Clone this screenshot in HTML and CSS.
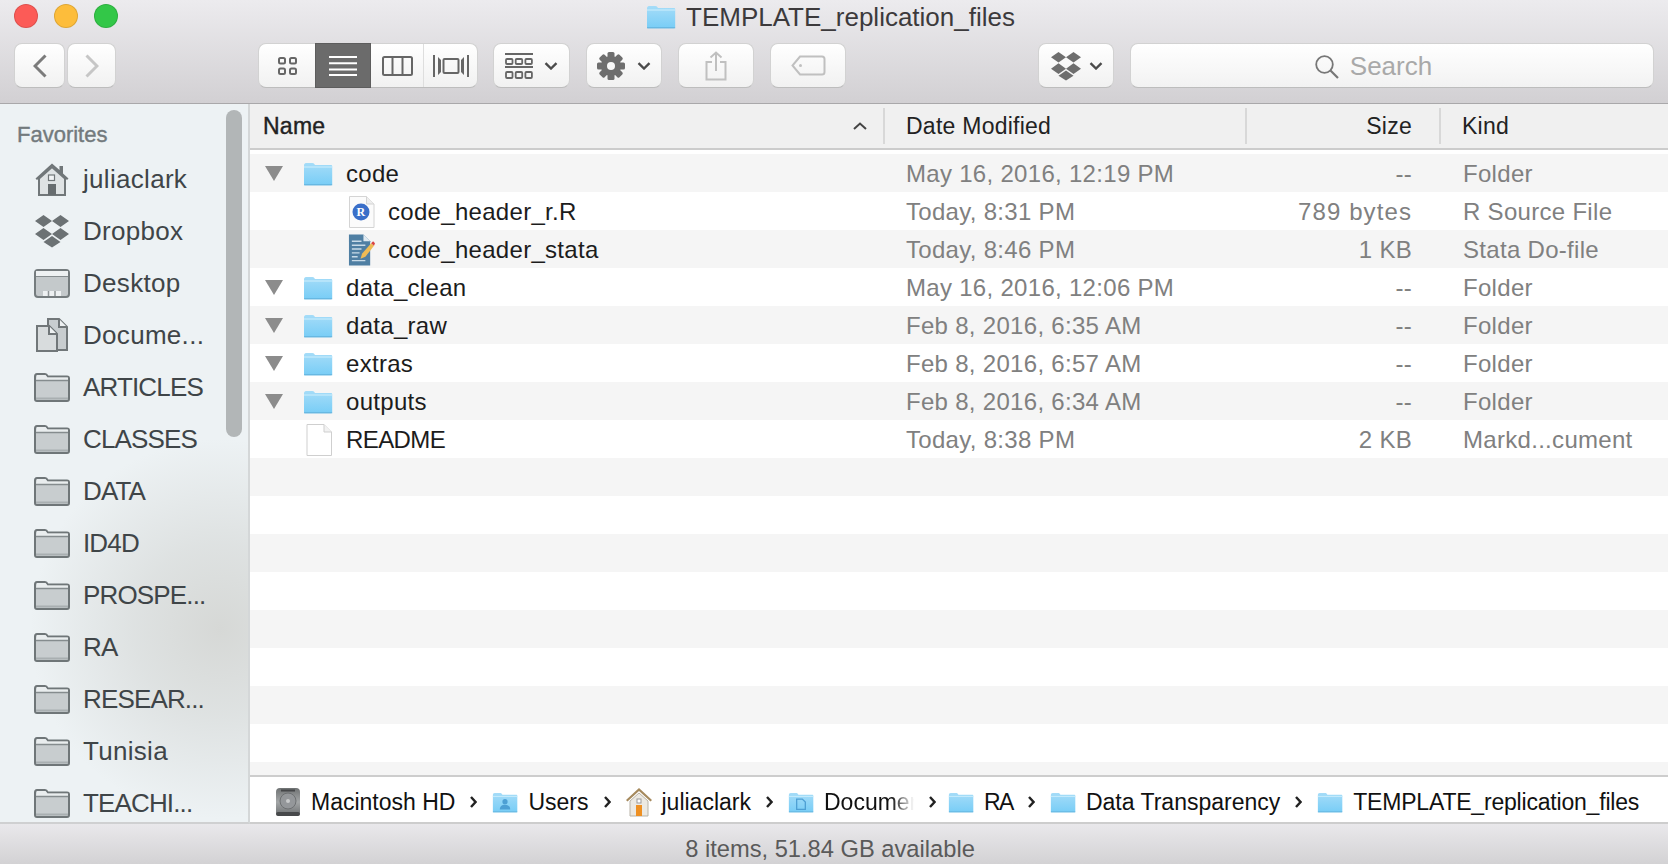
FILE: index.html
```html
<!DOCTYPE html>
<html lang="en">
<head>
<meta charset="utf-8">
<title>TEMPLATE_replication_files</title>
<link rel="stylesheet" href="styles.css">
</head>
<body>
<svg class="defs" width="0" height="0" aria-hidden="true">
  <defs>
    <linearGradient id="blue" x1="0" y1="0" x2="0" y2="1"><stop offset="0" stop-color="#a5dcf8"/><stop offset="1" stop-color="#78cdf6"/></linearGradient>
    <linearGradient id="disk" x1="0" y1="0" x2="0" y2="1"><stop offset="0" stop-color="#6f7273"/><stop offset=".5" stop-color="#a3a6a7"/><stop offset="1" stop-color="#6b6e70"/></linearGradient>
    <symbol id="folder" viewBox="0 0 30 24">
      <path d="M1 3.500C1 2 1.800 1 3 1h6.500c1.200 0 1.800.8 2.500 2H28c.7 0 1.200.5 1.200 1.200V22c0 .7-.5 1.200-1.200 1.200H2c-.7 0-1-.5-1-1.200z" fill="url(#blue)"/>
      <path d="M1 5h28.200" stroke="#c6ebfc" stroke-width="1.200"/>
      <path d="M1 22.800h28.200" stroke="#60b0da" stroke-width="1"/>
    </symbol>
    <symbol id="side-folder" viewBox="0 0 36 29">
      <path d="M1 3.500C1 2 1.800 1 3 1h8c1.300 0 2 .8 2.800 2.500H33c1.200 0 2 .8 2 2V26c0 1.200-.8 2-2 2H3c-1.200 0-2-.8-2-2z" fill="#c8cdcf" stroke="#6f7678" stroke-width="2"/>
      <path d="M2 7h32V4.500H13.500L11.500 2H3z" fill="#e9edee"/>
      <path d="M2 7.500h32" stroke="#858c8e" stroke-width="1.500"/>
      <path d="M2 25.500h32" stroke="#a9afb1" stroke-width="2"/>
    </symbol>
    <symbol id="dropbox" viewBox="0 0 36 34">
      <path d="M9.500 1 18 7l-8.500 6L1 7zM26.500 1 35 7l-8.500 6L18 7zM9.500 14 18 20l-8.500 6L1 20zM26.500 14 35 20l-8.500 6L18 20z" fill="currentColor"/>
      <path d="M18 22l8.500 6-8.500 5.500L9.500 28z" fill="currentColor"/>
    </symbol>
    <symbol id="chev" viewBox="0 0 14 8"><path d="M1.500 1.200 7 6.500l5.500-5.300" fill="none" stroke="#4b4b4b" stroke-width="2.400"/></symbol>
    <symbol id="tri" viewBox="0 0 18 15"><path d="M0 0h18L9 15z" fill="#8c8c8c"/></symbol>
    <symbol id="crumb" viewBox="0 0 7 12"><path d="M1 1l4.500 5L1 11" fill="none" stroke="#222" stroke-width="2.400"/></symbol>
  </defs>
</svg>
<div class="window">
  <header class="toolbar">
    <div class="lights"><span class="light red"></span><span class="light yellow"></span><span class="light green"></span></div>
    <div class="title">
      <svg class="title-icon"><use href="#folder"/></svg>
      <span>TEMPLATE_replication_files</span>
    </div>
    <div class="tools">
      <div class="nav">
        <button class="btn nav-back" type="button"><svg width="14" height="24" viewBox="0 0 14 24"><path d="M12.500 1.500 2 12l10.500 10.500" fill="none" stroke="#7b7b7b" stroke-width="3"/></svg></button>
        <button class="btn nav-fwd" type="button"><svg width="14" height="24" viewBox="0 0 14 24"><path d="M1.500 1.500 12 12 1.500 22.500" fill="none" stroke="#c6c6c6" stroke-width="3"/></svg></button>
      </div>
      <div class="views">
        <div class="view view-icon"><svg width="19" height="18" viewBox="0 0 19 18" fill="none" stroke="#666" stroke-width="2"><rect x="1" y="1" width="6" height="5.500" rx="1.500"/><rect x="12" y="1" width="6" height="5.500" rx="1.500"/><rect x="1" y="11.500" width="6" height="5.500" rx="1.500"/><rect x="12" y="11.500" width="6" height="5.500" rx="1.500"/></svg></div>
        <div class="view view-list"><svg width="28" height="20" viewBox="0 0 28 20" fill="none" stroke="#fff" stroke-width="2"><path d="M0 1h28M0 7.300h28M0 13.600h28M0 19h28"/></svg></div>
        <div class="view view-col"><svg width="31" height="20" viewBox="0 0 31 20" fill="none" stroke="#666" stroke-width="2"><rect x="1" y="1" width="29" height="18" rx="1.500"/><path d="M10.500 1v18M20.500 1v18"/></svg></div>
        <div class="view view-flow"><svg width="36" height="22" viewBox="0 0 36 22" fill="none" stroke="#666" stroke-width="2"><path d="M1 0v22M35 0v22"/><path d="M5 2v18l3-3V5zM31 2v18l-3-3V5z" fill="#666" stroke="none"/><rect x="10.500" y="4" width="15" height="14" rx="1"/></svg></div>
      </div>
      <button class="btn btn-arrange" type="button">
        <svg width="28" height="26" viewBox="0 0 28 26" fill="none" stroke="#666" stroke-width="1.800"><path d="M0 1h28M0 14h28" stroke-width="2"/><rect x="1" y="6" width="6.500" height="5" rx="1"/><rect x="10.700" y="6" width="6.500" height="5" rx="1"/><rect x="20.400" y="6" width="6.500" height="5" rx="1"/><rect x="1" y="19" width="6.500" height="6" rx="1"/><rect x="10.700" y="19" width="6.500" height="6" rx="1"/><rect x="20.400" y="19" width="6.500" height="6" rx="1"/></svg>
        <svg class="chev"><use href="#chev"/></svg>
      </button>
      <button class="btn btn-gear" type="button">
        <svg width="28" height="28" viewBox="0 0 28 28"><g fill="#6e6e6e"><rect x="10.500" y="0" width="7" height="28" rx="1.500"/><rect x="10.500" y="0" width="7" height="28" rx="1.500" transform="rotate(45 14 14)"/><rect x="10.500" y="0" width="7" height="28" rx="1.500" transform="rotate(90 14 14)"/><rect x="10.500" y="0" width="7" height="28" rx="1.500" transform="rotate(135 14 14)"/><circle cx="14" cy="14" r="10"/></g><circle cx="14" cy="14" r="4" fill="#f8f8f8"/></svg>
        <svg class="chev"><use href="#chev"/></svg>
      </button>
      <button class="btn btn-share" type="button">
        <svg width="22" height="30" viewBox="0 0 22 30" fill="none" stroke="#c0c0c0" stroke-width="2"><path d="M7 11H1.500v17.500h19V11H15M11 20V1.500M5.500 6.500 11 1.500l5.500 5"/></svg>
      </button>
      <button class="btn btn-tag" type="button">
        <svg width="35" height="21" viewBox="0 0 35 21" fill="none" stroke="#c0c0c0" stroke-width="2"><path d="M9 1.500h22c1.500 0 2.500 1 2.500 2.500v13c0 1.500-1 2.500-2.500 2.500H9L1.500 10.500z"/><circle cx="9.500" cy="10.500" r="1.500" fill="#c0c0c0" stroke="none"/></svg>
      </button>
      <button class="btn btn-drop" type="button">
        <svg class="drop-icon"><use href="#dropbox"/></svg>
        <svg class="chev"><use href="#chev"/></svg>
      </button>
      <div class="search">
        <svg width="24" height="24" viewBox="0 0 24 24" fill="none" stroke="#777" stroke-width="1.800"><circle cx="9.500" cy="9.500" r="8.300"/><path d="M15.500 15.500 23 23" stroke-width="2.200"/></svg>
        <span>Search</span>
      </div>
    </div>
  </header>

  <div class="body">
    <aside class="sidebar">
      <div class="side-head">Favorites</div>
      <div class="side-item">
        <svg class="side-icon side-tall" viewBox="0 0 36 34"><path d="M18 1.500 1.500 16.500l1.500 1.500L18 4.500 33 18l1.500-1.500L29 11.500V4h-3.500v4z" fill="#717779"/><path d="M5 16.500 18 5l13 11.500v16.500H5z" fill="#dfe3e4" stroke="#717779" stroke-width="2"/><rect x="14.500" y="13" width="6" height="5.500" fill="#f2f4f5" stroke="#717779" stroke-width="1.200"/><rect x="14" y="22" width="8" height="11" fill="#676d6f"/></svg>
        <span>juliaclark</span>
      </div>
      <div class="side-item">
        <svg class="side-icon side-drop"><use href="#dropbox"/></svg>
        <span>Dropbox</span>
      </div>
      <div class="side-item">
        <svg class="side-icon" viewBox="0 0 36 29"><rect x="1" y="1" width="34" height="27" rx="3" fill="#c4c9cb" stroke="#757c7e" stroke-width="2"/><path d="M2 2h32v5H2z" fill="#eef1f2"/><path d="M2 7.500h32" stroke="#858c8e"/><path d="M9 27v-5h18v5z" fill="#eef1f2"/><path d="M14.500 22v5M21 22v5" stroke="#8f9597" stroke-width="1.500"/></svg>
        <span>Desktop</span>
      </div>
      <div class="side-item">
        <svg class="side-icon side-tall" viewBox="0 0 36 34"><path d="M14 1h11l8 8v23H22V15l-8-8z" fill="#c8cdcf" stroke="#717779" stroke-width="2"/><path d="M25 1v8h8" fill="#eef1f2" stroke="#717779" stroke-width="2"/><path d="M3 8h12l8 8v17H3z" fill="#d8dcdd" stroke="#717779" stroke-width="2"/><path d="M15 8v8h8" fill="#eef1f2" stroke="#717779" stroke-width="2"/></svg>
        <span>Docume...</span>
      </div>
      <div class="side-item"><svg class="side-icon"><use href="#side-folder"/></svg><span class="caps">ARTICLES</span></div>
      <div class="side-item"><svg class="side-icon"><use href="#side-folder"/></svg><span class="caps">CLASSES</span></div>
      <div class="side-item"><svg class="side-icon"><use href="#side-folder"/></svg><span class="caps">DATA</span></div>
      <div class="side-item"><svg class="side-icon"><use href="#side-folder"/></svg><span class="caps">ID4D</span></div>
      <div class="side-item"><svg class="side-icon"><use href="#side-folder"/></svg><span class="caps">PROSPE...</span></div>
      <div class="side-item"><svg class="side-icon"><use href="#side-folder"/></svg><span class="caps">RA</span></div>
      <div class="side-item"><svg class="side-icon"><use href="#side-folder"/></svg><span class="caps">RESEAR...</span></div>
      <div class="side-item"><svg class="side-icon"><use href="#side-folder"/></svg><span>Tunisia</span></div>
      <div class="side-item"><svg class="side-icon"><use href="#side-folder"/></svg><span class="caps">TEACHI...</span></div>
      <div class="scrollbar"></div>
    </aside>

    <main class="main">
      <div class="head">
        <div class="hcell hname"><span>Name</span><svg width="14" height="8" viewBox="0 0 14 8" fill="none" stroke="#444" stroke-width="2"><path d="M1 7l6-5.500L13 7"/></svg></div>
        <div class="hcell hdate">Date Modified</div>
        <div class="hcell hsize">Size</div>
        <div class="hcell hkind">Kind</div>
      </div>
      <div class="list">
        <div class="row alt">
          <div class="name"><svg class="tri"><use href="#tri"/></svg><svg class="ficon"><use href="#folder"/></svg><span>code</span></div>
          <div>May 16, 2016, 12:19 PM</div><div class="size">--</div><div class="kind">Folder</div>
        </div>
        <div class="row">
          <div class="name child">
            <svg class="cicon" viewBox="0 0 26 32"><path d="M1 .500h17l7.500 7.500v23.500H1z" fill="#fbfbfb" stroke="#d4d4d4"/><path d="M18 .500V8h7.500" fill="#eee" stroke="#d4d4d4"/><circle cx="12.500" cy="16" r="8.500" fill="#3a6fc9"/><text class="r-glyph" x="12.500" y="20">R</text></svg>
            <span>code_header_r.R</span>
          </div>
          <div>Today, 8:31 PM</div><div class="size size-wide">789 bytes</div><div class="kind">R Source File</div>
        </div>
        <div class="row alt">
          <div class="name child">
            <svg class="cicon" viewBox="0 0 28 32"><path d="M1 0h15l7 7v25H1z" fill="#4f7fa3"/><path d="M16 0v7h7z" fill="#dfe9f0"/><path d="M4 7h10M4 11h14M4 15h10M4 19h8M4 23h6M4 27h14" stroke="#c9dbe8" stroke-width="1.500"/><path d="M13 25l1.500-5L24 9l3 2.500L18 23z" fill="#eebb55"/><path d="M24 9l2-2 2 2-1 2.500z" fill="#d94444"/></svg>
            <span>code_header_stata</span>
          </div>
          <div>Today, 8:46 PM</div><div class="size">1 KB</div><div class="kind">Stata Do-file</div>
        </div>
        <div class="row">
          <div class="name"><svg class="tri"><use href="#tri"/></svg><svg class="ficon"><use href="#folder"/></svg><span>data_clean</span></div>
          <div>May 16, 2016, 12:06 PM</div><div class="size">--</div><div class="kind">Folder</div>
        </div>
        <div class="row alt">
          <div class="name"><svg class="tri"><use href="#tri"/></svg><svg class="ficon"><use href="#folder"/></svg><span>data_raw</span></div>
          <div>Feb 8, 2016, 6:35 AM</div><div class="size">--</div><div class="kind">Folder</div>
        </div>
        <div class="row">
          <div class="name"><svg class="tri"><use href="#tri"/></svg><svg class="ficon"><use href="#folder"/></svg><span>extras</span></div>
          <div>Feb 8, 2016, 6:57 AM</div><div class="size">--</div><div class="kind">Folder</div>
        </div>
        <div class="row alt">
          <div class="name"><svg class="tri"><use href="#tri"/></svg><svg class="ficon"><use href="#folder"/></svg><span>outputs</span></div>
          <div>Feb 8, 2016, 6:34 AM</div><div class="size">--</div><div class="kind">Folder</div>
        </div>
        <div class="row">
          <div class="name doc"><svg class="dicon" viewBox="0 0 26 32"><path d="M1 .500h17l7.500 7.500v23.500H1z" fill="#fff" stroke="#cfcfcf"/><path d="M18 .500V8h7.500" fill="#f2f2f2" stroke="#cfcfcf"/></svg><span class="caps-row">README</span></div>
          <div>Today, 8:38 PM</div><div class="size">2 KB</div><div class="kind">Markd...cument</div>
        </div>
        <div class="row alt"></div><div class="row"></div><div class="row alt"></div><div class="row"></div>
        <div class="row alt"></div><div class="row"></div><div class="row alt"></div><div class="row"></div>
        <div class="row alt"></div>
      </div>
      <nav class="path">
        <svg class="p-icon" viewBox="0 0 26 30"><rect x="1" y="1" width="24" height="28" rx="4" fill="url(#disk)"/><rect x="6" y="2.500" width="14" height="2" fill="#454749"/><circle cx="13" cy="14" r="8" fill="#94979a" stroke="#6d7072"/><circle cx="13" cy="14" r="2" fill="#c9cbcc"/><rect x="1" y="25" width="24" height="4" rx="2" fill="#47494b"/></svg>
        <span class="p-text">Macintosh HD</span>
        <svg class="crumb"><use href="#crumb"/></svg>
        <svg class="p-folder" viewBox="0 0 30 24"><use href="#folder" width="30" height="24"/><circle cx="15" cy="11" r="3" fill="#4d9fd4"/><path d="M9 20c0-4 3-5.500 6-5.500s6 1.500 6 5.500z" fill="#4d9fd4"/></svg>
        <span class="p-text">Users</span>
        <svg class="crumb"><use href="#crumb"/></svg>
        <svg class="p-icon" viewBox="0 0 26 30"><path d="M13 1 0 13l1.500 1.500L13 4l11.500 10.500L26 13z" fill="#a68a5e"/><path d="M4 14 13 6l9 8v15H4z" fill="#ece9e2" stroke="#b9b3a6"/><rect x="11" y="12" width="4" height="4" fill="#fff" stroke="#999"/><rect x="10" y="18" width="6" height="11" fill="#ee9022"/></svg>
        <span class="p-text">juliaclark</span>
        <svg class="crumb"><use href="#crumb"/></svg>
        <svg class="p-folder" viewBox="0 0 30 24"><use href="#folder" width="30" height="24"/><path d="M10 8h6.500l3.500 3.500V20H10z" fill="none" stroke="#4d9fd4" stroke-width="1.500"/></svg>
        <span class="p-text p-fade">Documents</span>
        <svg class="crumb crumb-tight"><use href="#crumb"/></svg>
        <svg class="p-folder"><use href="#folder"/></svg>
        <span class="p-text p-ra">RA</span>
        <svg class="crumb"><use href="#crumb"/></svg>
        <svg class="p-folder"><use href="#folder"/></svg>
        <span class="p-text">Data Transparency</span>
        <svg class="crumb"><use href="#crumb"/></svg>
        <svg class="p-folder"><use href="#folder"/></svg>
        <span class="p-text p-tight">TEMPLATE_replication_files</span>
      </nav>
    </main>
  </div>

  <footer class="status">8 items, 51.84 GB available</footer>
</div>
</body>
</html>
```

FILE: styles.css
```css
* { box-sizing: border-box; }
html, body { margin: 0; padding: 0; height: 100%; overflow: hidden; }
body { font-family: "Liberation Sans", Arial, sans-serif; background: #fff; }
.defs { position: absolute; }
.window { display: flex; flex-direction: column; width: 1668px; height: 864px; overflow: hidden; }

/* toolbar */
.toolbar { position: relative; flex: 0 0 104px; background: linear-gradient(#ecebee, #d2d0d3); border-bottom: 1px solid #a9a8aa; }
.lights { position: absolute; left: 14px; top: 4px; display: flex; gap: 16px; }
.light { width: 24px; height: 24px; border-radius: 50%; border: 1px solid rgba(0,0,0,.12); }
.red { background: #fc5b57; }
.yellow { background: #fdbd3b; }
.green { background: #33c748; }
.title { display: flex; align-items: center; justify-content: center; gap: 10px; height: 32px; padding: 2px 7px 0 0; font-size: 26px; color: #3c3a3c; }
.title-icon { width: 30px; height: 24px; }
.tools { display: flex; align-items: flex-start; padding: 11px 14px 0 14px; }
.btn { display: flex; align-items: center; justify-content: center; flex: none; height: 45px; padding: 0; background: linear-gradient(#ffffff, #f1f1f1); border: 1px solid #d2d2d2; border-bottom-color: #bdbdbd; border-radius: 8px; }
.nav { display: flex; gap: 2px; margin-right: 142px; }
.nav-back { width: 51px; }
.nav-fwd { width: 49px; }
.views { display: flex; flex: none; width: 220px; height: 45px; margin-right: 15px; background: linear-gradient(#ffffff, #f1f1f1); border: 1px solid #d2d2d2; border-bottom-color: #bdbdbd; border-radius: 8px; }
.view { display: flex; align-items: center; justify-content: center; }
.view-icon { width: 56px; }
.view-list { width: 56px; background: #6b6b6b; margin: -1px 0; border: 1px solid #5d5d5d; }
.view-col { width: 53px; border-right: 1px solid #dedede; }
.view-flow { flex: 1; }
.btn-arrange { width: 77px; margin-right: 16px; gap: 11px; }
.btn-gear { width: 76px; margin-right: 16px; gap: 12px; }
.btn-share { width: 76px; margin-right: 16px; }
.btn-tag { width: 76px; margin-right: 192px; }
.btn-drop { width: 76px; margin-right: 16px; gap: 7px; }
.chev { width: 14px; height: 8px; }
.drop-icon { width: 32px; height: 30px; color: #6e6e6e; }
.search { flex: 1; display: flex; align-items: center; justify-content: center; gap: 11px; height: 45px; padding: 2px 37px 0 0; background: linear-gradient(#ffffff, #f2f2f2); border: 1px solid #d2d2d2; border-bottom-color: #bdbdbd; border-radius: 8px; font-size: 26px; color: #a9a9a9; }

/* body */
.body { flex: 1; display: flex; min-height: 0; }
.sidebar { position: relative; flex: 0 0 250px; overflow: hidden; padding-top: 16px; border-right: 2px solid #d4d7d8; border-bottom: 2px solid #cfd0d1; background: radial-gradient(ellipse 190px 190px at 220px 525px, #d6d8d6 0%, rgba(216,219,218,.7) 45%, rgba(236,242,244,0) 100%), #edf2f4; }
.side-head { height: 30px; margin-bottom: 3px; padding-left: 17px; font-size: 22px; line-height: 30px; color: #737a7d; -webkit-text-stroke: .4px #737a7d; }
.side-item { display: flex; align-items: center; gap: 13px; height: 52px; padding-left: 34px; font-size: 26px; letter-spacing: .3px; color: #3f4548; }
.side-icon { flex: 0 0 36px; width: 36px; height: 29px; }
.side-tall { height: 34px; }
.side-drop { height: 34px; color: #6c7274; }
.caps { letter-spacing: -.85px; }
.scrollbar { position: absolute; left: 226px; top: 6px; width: 16px; height: 327px; border-radius: 8px; background: #b2b6b7; }

/* main */
.main { flex: 1; display: flex; flex-direction: column; min-width: 0; }
.head { flex: 0 0 46px; display: flex; align-items: center; background: #f0f0f0; border-bottom: 2px solid #cccccc; font-size: 23px; letter-spacing: .25px; color: #222; }
.hcell { display: flex; align-items: center; height: 36px; }
.hname { width: 633px; padding: 0 16px 0 13px; justify-content: space-between; -webkit-text-stroke: .4px #222; }
.hdate { width: 362px; padding-left: 21px; border-left: 2px solid #d8d8d8; }
.hsize { width: 194px; padding-right: 27px; justify-content: flex-end; border-left: 2px solid #d8d8d8; }
.hkind { flex: 1; padding-left: 21px; border-left: 2px solid #d8d8d8; }
.list { flex: 1; min-height: 0; overflow: hidden; padding-top: 4px; }
.row { display: grid; grid-template-columns: 656px 380px 126px 1fr; align-items: center; height: 38px; padding-top: 1px; font-size: 24px; letter-spacing: .3px; color: #808080; }
.alt { background: #f5f5f5; }
.name { display: flex; align-items: center; height: 37px; color: #1c1c1c; padding-left: 15px; }
.tri { flex: none; width: 18px; height: 15px; margin-right: 20px; }
.ficon { flex: none; width: 30px; height: 24px; margin-right: 13px; }
.child { padding-left: 98px; }
.cicon { flex: none; width: 27px; height: 32px; margin-right: 13px; }
.r-glyph { font-family: "Liberation Serif", serif; font-size: 12px; font-weight: 700; fill: #fff; text-anchor: middle; }
.doc { padding-left: 56px; }
.dicon { flex: none; width: 26px; height: 32px; margin-right: 14px; }
.caps-row { letter-spacing: -.6px; }
.size { text-align: right; white-space: nowrap; }
.size-wide { letter-spacing: 1.100px; }
.kind { padding-left: 51px; white-space: nowrap; }

/* path bar */
.path { flex: 0 0 49px; display: flex; align-items: center; padding: 5px 0 0 25px; background: #fff; border-top: 2px solid #cdcdcd; border-bottom: 2px solid #cdcdcd; font-size: 23px; color: #111; white-space: nowrap; }
.p-icon { flex: none; width: 26px; height: 30px; margin-right: 10px; }
.p-folder { flex: none; width: 26px; height: 23px; margin-right: 10px; }
.p-text { display: block; }
.p-fade { width: 90px; overflow: hidden; -webkit-mask-image: linear-gradient(90deg, #000 75%, transparent); mask-image: linear-gradient(90deg, #000 75%, transparent); }
.p-ra { letter-spacing: -1.5px; }
.p-tight { letter-spacing: -.2px; }
.crumb { flex: none; width: 7px; height: 12px; margin: 0 15px 0 15px; }
.crumb-tight { margin-right: 12px; }

/* status */
.status { flex: 0 0 40px; display: flex; align-items: center; justify-content: center; padding: 10px 8px 0 0; background: linear-gradient(#e9e8eb, #d3d2d4); font-size: 23.700px; color: #5a5a5a; }
```
